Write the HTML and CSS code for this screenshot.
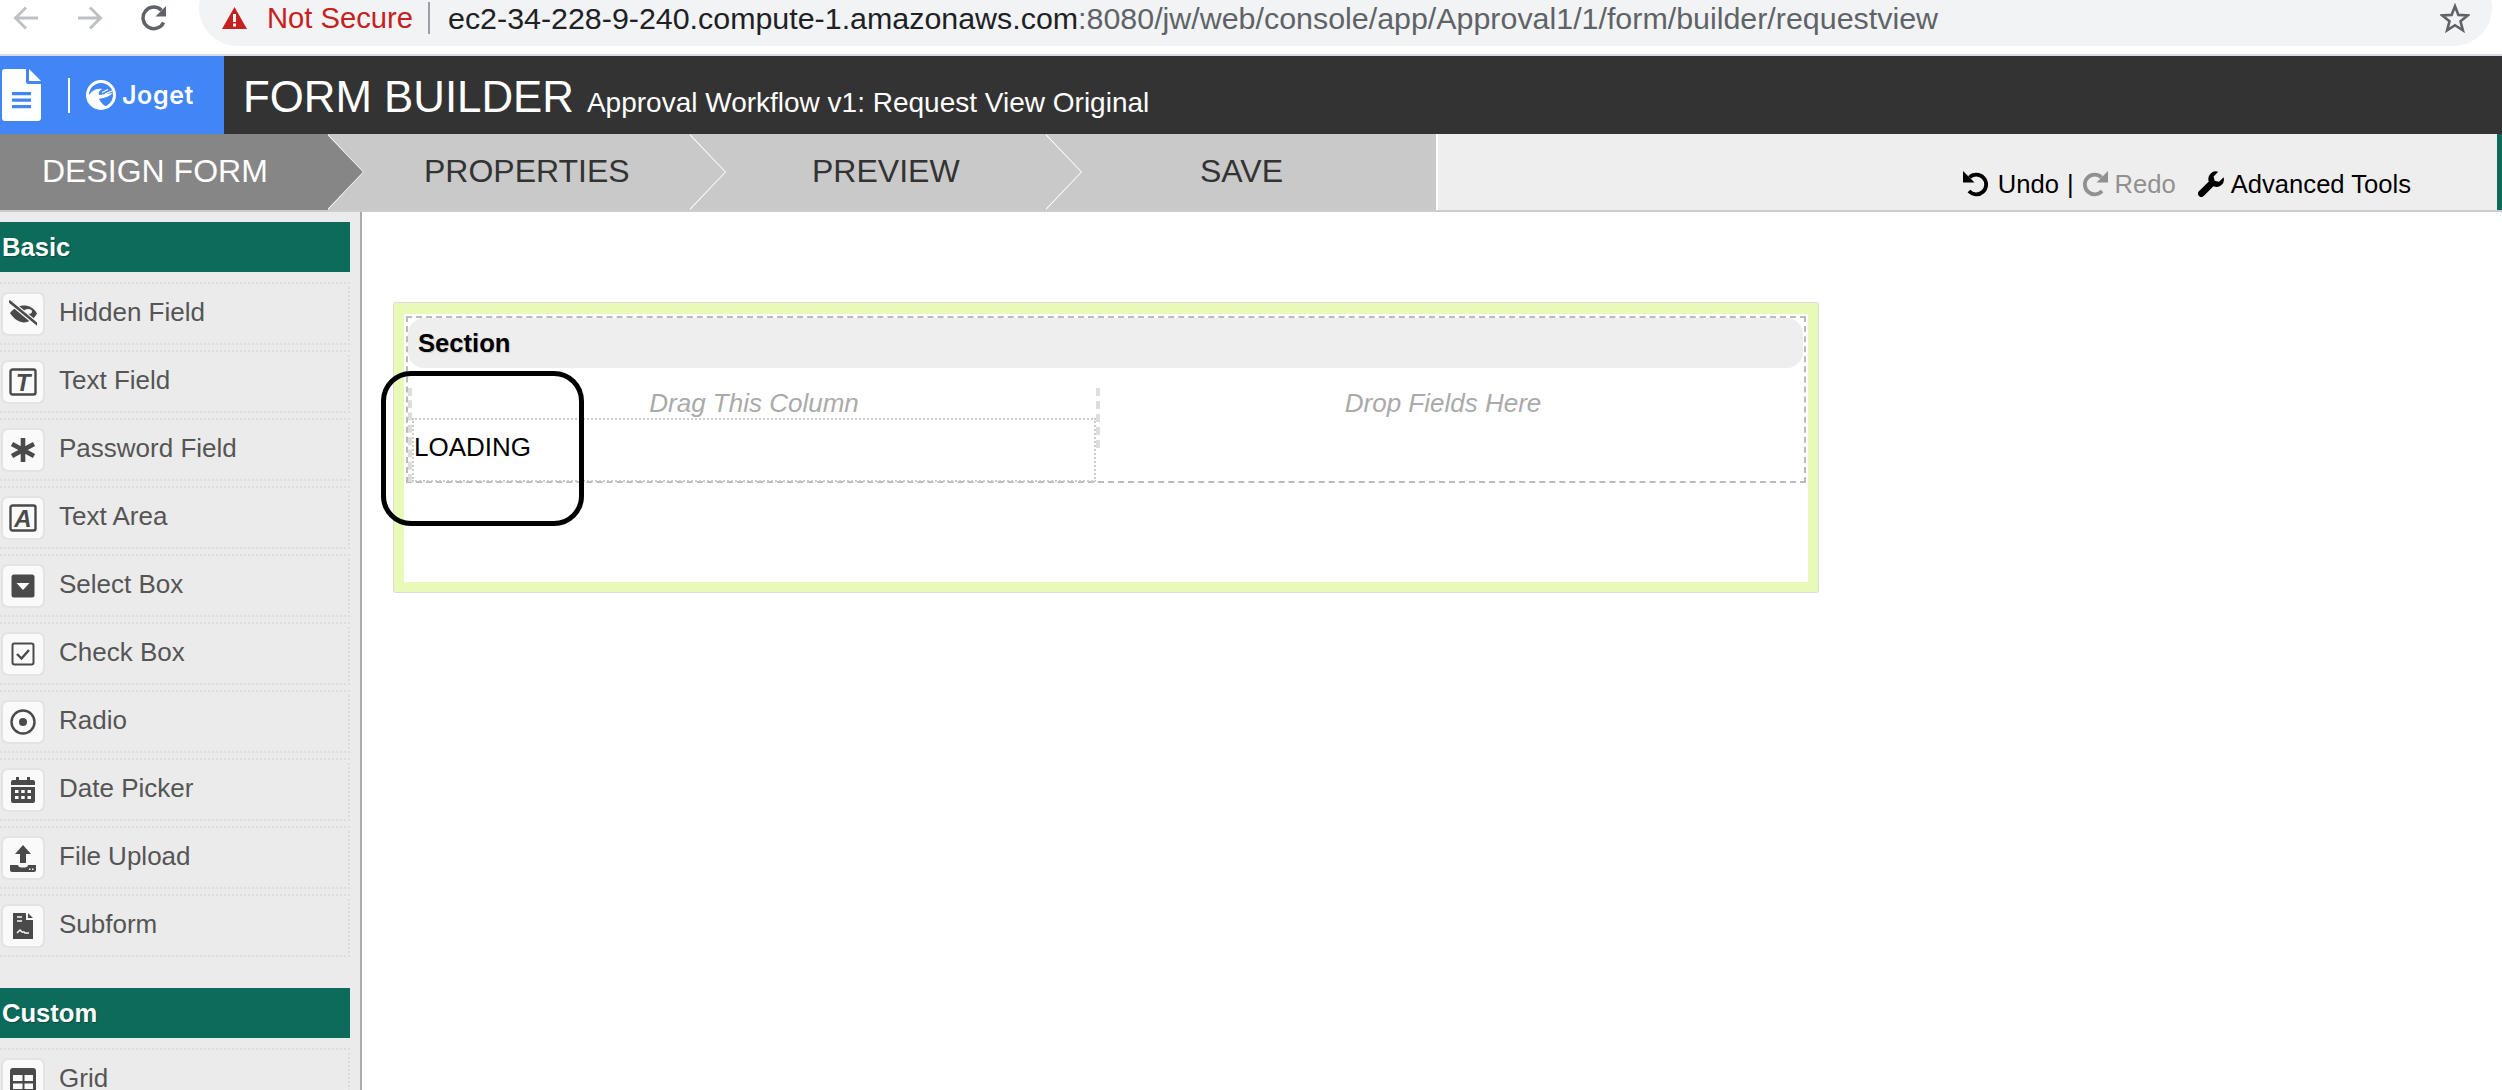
FILE: index.html
```html
<!DOCTYPE html>
<html lang="en">
<head>
<meta charset="utf-8">
<title>Form Builder</title>
<link rel="stylesheet" href="styles.css">
</head>
<body>
<header class="chrome">
  <svg class="nav nav-back" viewBox="0 0 26 26"><path d="M25 13H3M13 2.5 2.5 13 13 23.5"/></svg>
  <svg class="nav nav-fwd" viewBox="0 0 26 26"><path d="M1 13h22M13 2.5 23.5 13 13 23.5"/></svg>
  <svg class="reload" viewBox="0 0 26 26"><path class="reload-arc" d="M22.6 17.5A10.8 10.8 0 1 1 20.5 5.2"/><path class="reload-head" d="M25 1v10.5H14.5z"/></svg>
  <div class="address">
    <svg class="warn" viewBox="0 0 25 22"><path d="M12.5 0 25 22H0z"/><rect x="11" y="7" width="3" height="8" fill="#fff"/><rect x="11" y="16.5" width="3" height="3" fill="#fff"/></svg>
    <span class="not-secure">Not Secure</span>
    <span class="addr-sep"></span>
    <span class="url"><span class="url-host">ec2-34-228-9-240.compute-1.amazonaws.com</span>:8080/jw/web/console/app/Approval1/1/form/builder/requestview</span>
    <svg class="star" viewBox="0 0 30 30"><path d="M15 3.2 18.4 11.9 27.7 12.4 20.5 18.3 22.9 27.3 15 22.2 7.1 27.3 9.5 18.3 2.3 12.4 11.6 11.9z"/></svg>
  </div>
</header>

<div class="titlebar">
  <div class="brand">
    <svg class="doc" viewBox="0 0 39 52"><path fill="#fff" d="M3 0H24V13a2 2 0 0 0 2 2H39V49a3 3 0 0 1-3 3H3a3 3 0 0 1-3-3V3a3 3 0 0 1 3-3z"/><path fill="#fff" d="M27 0 39 12H27z"/><path fill="#4285f4" d="M10 23h19v3.200H10zM10 29.500h19v3.200H10zM10 36h19v3.200H10z"/></svg>
    <span class="brand-sep"></span>
    <svg class="joget-mark" viewBox="0 0 30 30"><circle cx="15" cy="15" r="13.500" fill="none" stroke="#fff" stroke-width="3"/><path fill="#fff" d="M2 17C5 11 10 8 16 9 13 11 12 13 13 15L27 13C23 17 17 18 13 19 15 23 18 26 22 27L15 29C8 28 3 23 2 17z"/><path fill="none" stroke="#fff" stroke-width="1.300" d="M16 12.500l6-3M19 14l7-3"/></svg>
    <span class="joget-word">Joget</span>
  </div>
  <div class="heading">
    <span class="heading-main">FORM BUILDER</span>
    <span class="heading-sub">Approval Workflow v1: Request View Original</span>
  </div>
</div>

<nav class="stepbar">
  <div class="step step-active step-design">DESIGN FORM</div>
  <div class="step step-props">PROPERTIES</div>
  <div class="step step-preview">PREVIEW</div>
  <div class="step step-save">SAVE</div>
  <div class="tools">
    <svg class="tool-icon" viewBox="0 0 26 26"><path fill="none" stroke="#000" stroke-width="3.800" d="M6.500 6.500A9.800 9.800 0 1 1 6 20"/><path d="M0 0v11.500h11.500z"/></svg>
    <span class="tool-label tool-undo">Undo</span>
    <span class="tool-pipe">|</span>
    <svg class="tool-icon tool-off" viewBox="0 0 26 26"><path fill="none" stroke="#909090" stroke-width="3.800" d="M19.500 6.500A9.800 9.800 0 1 0 20 20"/><path fill="#909090" d="M26 0v11.500H14.500z"/></svg>
    <span class="tool-label tool-off-text">Redo</span>
    <svg class="tool-icon wrench" viewBox="0 0 26 26"><path d="M25.600 6.200 21 10.800l-4.300-1.100L15.600 5.400 20.200.8a7.500 7.500 0 0 0-9.400 9.700L.9 20.300a3.400 3.400 0 0 0 4.800 4.800l9.800-9.800a7.500 7.500 0 0 0 10.100-9.100z"/></svg>
    <span class="tool-label">Advanced Tools</span>
  </div>
</nav>

<div class="workspace">
  <aside class="sidebar">
    <h2 class="group">Basic</h2>
    <div class="field"><span class="ico"><svg viewBox="0 0 28 28"><path fill="#4a4a4a" d="M1 13C5 8 10 5.500 15 5.500S25 8 28 13.500C25 19 20 22.500 15 22.500S5 19 1 13z"/><ellipse cx="19" cy="11.500" rx="4" ry="2.500" fill="#fafafa"/><path stroke="#fafafa" stroke-width="5" d="M0 1l29 24"/><path stroke="#4a4a4a" stroke-width="2.600" d="M0 1l29 24"/></svg></span>Hidden Field</div>
    <div class="field"><span class="ico"><svg viewBox="0 0 28 28"><rect x="1.500" y="1.500" width="25" height="25" rx="2" fill="none" stroke="#4a4a4a" stroke-width="2.400"/><text x="14" y="23" text-anchor="middle" class="ico-letter">T</text></svg></span>Text Field</div>
    <div class="field"><span class="ico"><svg viewBox="0 0 28 28"><path stroke="#4a4a4a" stroke-width="4.600" d="M14 2v24M3 8l22 12M25 8 3 20"/></svg></span>Password Field</div>
    <div class="field"><span class="ico"><svg viewBox="0 0 28 28"><rect x="1.500" y="1.500" width="25" height="25" rx="2" fill="none" stroke="#4a4a4a" stroke-width="2.400"/><text x="14" y="23" text-anchor="middle" class="ico-letter">A</text></svg></span>Text Area</div>
    <div class="field"><span class="ico"><svg viewBox="0 0 28 28"><rect x="2.500" y="2.500" width="23" height="23" rx="2.500" fill="#4a4a4a"/><path fill="#fff" d="M7.500 11h13L14 18z"/></svg></span>Select Box</div>
    <div class="field"><span class="ico"><svg viewBox="0 0 28 28"><rect x="3.500" y="3.500" width="21" height="21" rx="2" fill="none" stroke="#4a4a4a" stroke-width="2"/><path fill="none" stroke="#4a4a4a" stroke-width="2.400" d="M8 14l4.500 4.500L20 10"/></svg></span>Check Box</div>
    <div class="field"><span class="ico"><svg viewBox="0 0 28 28"><circle cx="14" cy="14" r="11.500" fill="none" stroke="#4a4a4a" stroke-width="2.400"/><circle cx="14" cy="14" r="4" fill="#4a4a4a"/></svg></span>Radio</div>
    <div class="field"><span class="ico"><svg viewBox="0 0 28 28"><path fill="#4a4a4a" d="M7 1h3v3h8V1h3v3h3a2 2 0 0 1 2 2v3H2V6a2 2 0 0 1 2-2h3zM2 11h24v14a2 2 0 0 1-2 2H4a2 2 0 0 1-2-2z"/><path fill="#fff" d="M6 14h3.500v3H6zM12.200 14h3.500v3h-3.500zM18.500 14H22v3h-3.500zM6 20h3.500v3H6zM12.200 20h3.500v3h-3.500zM18.500 20H22v3h-3.500z"/></svg></span>Date Picker</div>
    <div class="field"><span class="ico"><svg viewBox="0 0 28 28"><path fill="#4a4a4a" d="M14 1l8 9h-5v9h-6v-9H6zM1 21h8c0 2 2 2.500 5 2.500s5-.5 5-2.500h8v5a2 2 0 0 1-2 2H3a2 2 0 0 1-2-2z"/><path fill="#fafafa" d="M20 24.500h1.500V26H20zM23 24.500h1.500V26H23z"/></svg></span>File Upload</div>
    <div class="field"><span class="ico"><svg viewBox="0 0 28 28"><path fill="#4a4a4a" d="M4 1h13v7h7v19H4zM19 1l5 5h-5z"/><path fill="none" stroke="#fafafa" stroke-width="1.500" d="M8 5h5M8 9h5M8 21l3-3 2 2h2l1 1h4"/></svg></span>Subform</div>
    <h2 class="group group-custom">Custom</h2>
    <div class="field"><span class="ico"><svg viewBox="0 0 28 28"><rect x="1" y="2" width="26" height="24" rx="3" fill="#4a4a4a"/><path fill="#fafafa" d="M4 9h9.500v6H4zM15.500 9H24v6h-8.500zM4 17.500h9.500V23H4zM15.500 17.500H24V23h-8.500z"/></svg></span>Grid</div>
  </aside>

  <main class="canvas">
    <div class="form-frame">
      <section class="form-section">
        <div class="section-head">Section</div>
        <div class="columns">
          <div class="col col-left">
            <div class="col-hint">Drag This Column</div>
            <div class="loading-box">LOADING</div>
          </div>
          <div class="col col-right">
            <div class="col-hint">Drop Fields Here</div>
          </div>
        </div>
      </section>
    </div>
    <div class="callout"></div>
  </main>
</div>
</body>
</html>
```
FILE: styles.css
```css
* { box-sizing: border-box; }
html, body { margin: 0; padding: 0; }
body {
  width: 2502px;
  height: 1090px;
  overflow: hidden;
  display: flex;
  flex-direction: column;
  background: #fff;
  font-family: "Liberation Sans", Arial, sans-serif;
  font-size: 25.6px;
}

/* browser chrome */
.chrome {
  flex: 0 0 56px;
  display: flex;
  align-items: center;
  padding: 0 10px 19px 13px;
  background: #fff;
  border-bottom: 2px solid #dadce0;
  overflow: hidden;
}
.nav { width: 26px; height: 26px; fill: none; stroke: #bdc1c6; stroke-width: 3; flex: none; }
.nav-fwd { margin-left: 38px; }
.reload { width: 26px; height: 26px; margin-left: 38px; flex: none; }
.reload-arc { fill: none; stroke: #5f6368; stroke-width: 3.4; }
.reload-head { fill: #5f6368; }
.address {
  flex: 1;
  align-self: flex-start;
  height: 76px;
  margin: -30px 0 0 32px;
  padding: 30px 22px 10px 23px;
  border-radius: 38px;
  background: #f1f3f4;
  display: flex;
  align-items: center;
  white-space: nowrap;
}
.warn { width: 25px; height: 22px; fill: #c5221f; flex: none; }
.not-secure { margin-left: 20px; color: #c5221f; font-size: 29.2px; }
.addr-sep { width: 2px; height: 32px; margin: 0 18px 0 15px; background: #9aa0a6; }
.url { flex: 1; color: #5f6368; font-size: 30.4px; }
.url-host { color: #202124; }
.star { width: 30px; height: 30px; fill: none; stroke: #5f6368; stroke-width: 2.600; flex: none; }

/* title bar */
.titlebar {
  flex: 0 0 78px;
  display: flex;
  background: #333;
  color: #fff;
}
.brand {
  flex: 0 0 224px;
  display: flex;
  align-items: center;
  padding-left: 2px;
  background: #4285f4;
}
.doc { width: 39px; height: 52px; flex: none; }
.brand-sep { width: 2px; height: 35px; margin: 0 16px 0 27px; background: #fff; }
.joget-mark { width: 30px; height: 30px; flex: none; }
.joget-word { margin-left: 6px; font-family: Inter, sans-serif; font-weight: 600; font-size: 25px; letter-spacing: .6px; }
.heading { display: flex; align-items: baseline; padding: 17px 0 0 19px; }
.heading-main { font-size: 43.800px; line-height: 48px; }
.heading-sub { margin-left: 13px; font-size: 28px; }

/* step bar */
.stepbar {
  flex: 0 0 78px;
  display: flex;
  border-bottom: 2px solid #ccc;
  background: #eee;
}
.step {
  position: relative;
  display: flex;
  align-items: center;
  padding-bottom: 2px;
  background: #c9c9c9;
  color: #333;
  font-size: 32px;
}
.step::after {
  content: "";
  position: absolute;
  z-index: 2;
  top: 0;
  right: -36px;
  width: 36px;
  height: 100%;
  background: #fff;
  clip-path: polygon(0 0, 100% 50%, 0 100%, 0 98%, 97% 50%, 0 2%);
}
.step-design { flex: 0 0 328px; padding-left: 42px; background: #868686; color: #fff; }
.step-design::before {
  content: "";
  position: absolute;
  z-index: 1;
  top: 0;
  right: -36px;
  width: 36px;
  height: 100%;
  background: #868686;
  clip-path: polygon(0 0, 100% 50%, 0 100%);
}
.step-props { flex: 0 0 362px; padding-left: 96px; }
.step-preview { flex: 0 0 356px; padding-left: 122px; }
.step-save { flex: 0 0 390px; padding-left: 154px; }
.step-save::after { display: none; }
.tools {
  flex: 1;
  display: flex;
  align-items: flex-end;
  justify-content: flex-end;
  padding: 0 86px 11px 0;
  border-left: 2px solid #fff;
  border-right: 5px solid #0c6b5b;
  color: #000;
}
.tool-icon { width: 26px; height: 26px; flex: none; margin-bottom: 2px; }
.tool-label { margin-left: 7px; line-height: 30px; }
.tool-undo { margin-left: 9px; }
.tool-pipe { margin: 0 8px; line-height: 30px; }
.tool-off-text { color: #909090; }
.wrench { margin-left: 22px; }

/* workspace */
.workspace { flex: 1; min-height: 0; display: flex; }
.sidebar {
  flex: 0 0 362px;
  padding-top: 10px;
  overflow: hidden;
  background: #ebebeb;
  border-right: 2px solid #aaa;
}
.group {
  width: 350px;
  height: 50px;
  margin: 0 0 10px;
  padding-left: 2px;
  background: #0c6b5b;
  color: #fff;
  font-size: 25.600px;
  font-weight: bold;
  line-height: 50px;
  text-shadow: 1px 1px 1px rgba(0, 0, 0, .3);
}
.group-custom { margin-top: 31px; }
.field {
  display: flex;
  align-items: center;
  width: 350px;
  height: 63px;
  margin-bottom: 5px;
  padding: 0 0 3px 1px;
  border: 2px dotted #ddd;
  border-left: 0;
  color: #555;
  font-size: 26px;
  line-height: 1;
}
.ico {
  flex: none;
  display: flex;
  align-items: center;
  justify-content: center;
  width: 44px;
  height: 44px;
  margin: 0 14px -3px 0;
  background: #fafafa;
  border: 2px solid #e3e3e3;
  border-radius: 7px;
}
.ico svg { width: 28px; height: 28px; }
.ico-letter { font-family: "Liberation Sans", sans-serif; font-size: 24px; font-weight: bold; font-style: italic; fill: #4a4a4a; }

/* canvas */
.canvas { position: relative; flex: 1; padding: 91px 0 0 32px; }
.form-frame {
  width: 1424px;
  height: 289px;
  padding: 2px;
  border: solid #e8f9b8;
  border-width: 11px 10px 10px;
  border-radius: 2px;
  box-shadow: 0 0 0 1px #dcdcdc;
  background: #fff;
}
.form-section {
  width: 1400px;
  height: 167px;
  display: flex;
  flex-direction: column;
  border: 2px dashed #bbb;
}
.section-head {
  flex: 0 0 50px;
  width: 1395px;
  padding-left: 10px;
  background: #eee;
  border-radius: 16px;
  color: #000;
  font-weight: bold;
  line-height: 50px;
  text-shadow: 1px 1px 1px rgba(0, 0, 0, .15);
}
.columns { flex: 1; display: flex; padding-top: 20px; margin-bottom: -1px; }
.col-hint {
  height: 30px;
  color: #aaa;
  font-size: 26px;
  font-style: italic;
  line-height: 30px;
  text-align: center;
}
.col-left {
  flex: 0 0 688px;
  display: flex;
  flex-direction: column;
  border-left: 4px dashed #ddd;
}
.loading-box {
  flex: 1;
  display: flex;
  align-items: center;
  padding: 0 0 5px;
  border: 2px dotted #ccc;
  color: #000;
  font-size: 26px;
}
.col-right {
  flex: 0 0 707px;
  height: 60px;
  padding-right: 17px;
  border-left: 4px dashed #ddd;
}
.callout {
  position: absolute;
  left: 19px;
  top: 159px;
  width: 203px;
  height: 155px;
  border: 5px solid #000;
  border-radius: 30px;
}
```
